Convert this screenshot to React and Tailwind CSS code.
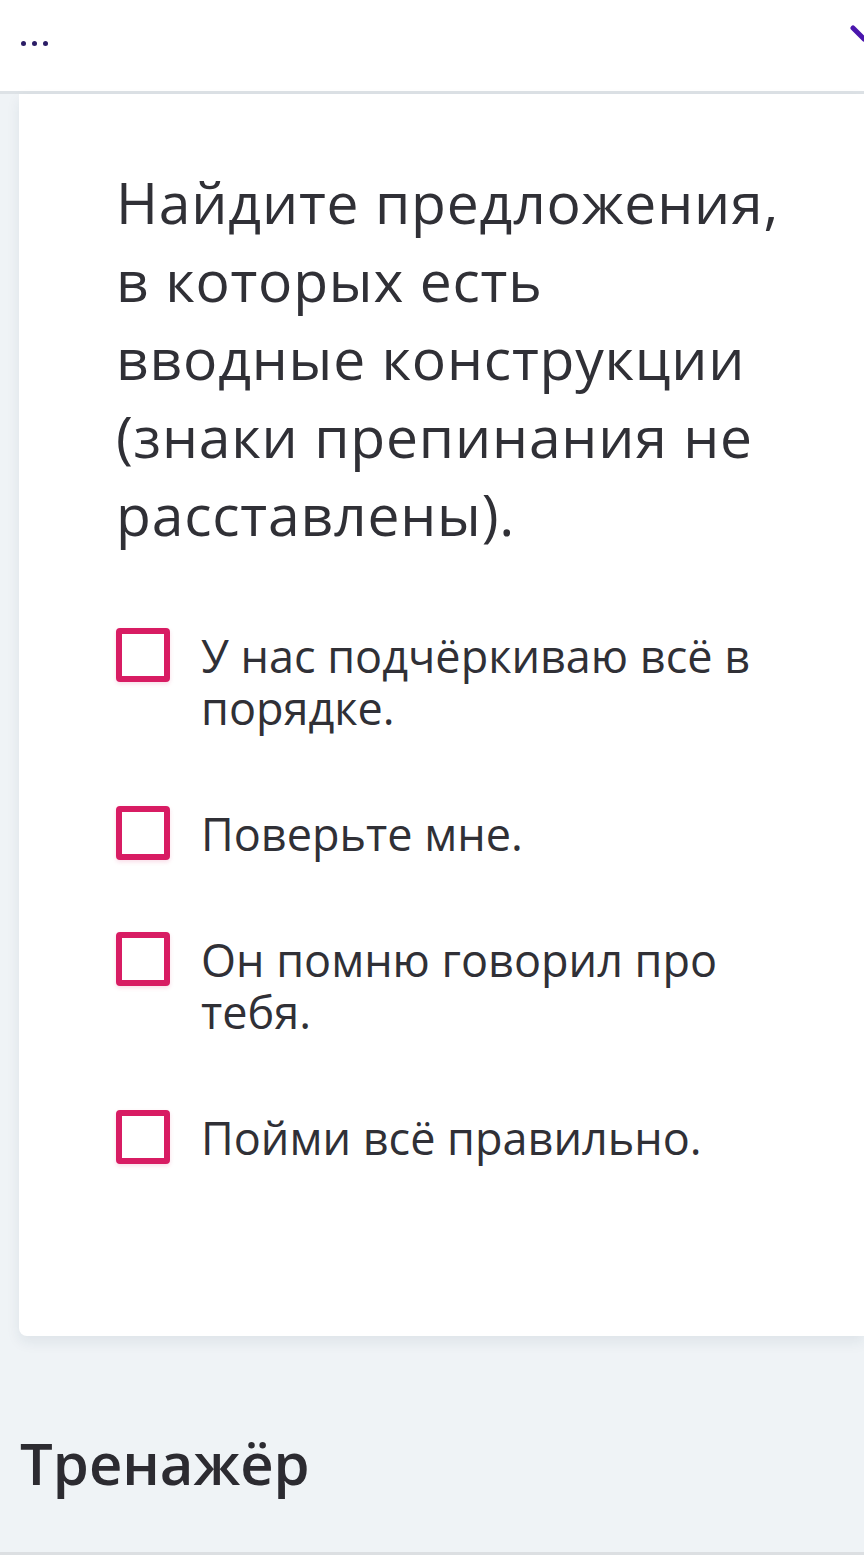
import React from 'react';

const options = [
  'У нас подчёркиваю всё в порядке.',
  'Поверьте мне.',
  'Он помню говорил про тебя.',
  'Пойми всё правильно.',
];

function Checkbox() {
  return (
    <span className="mt-[-2px] h-[54px] w-[54px] shrink-0 rounded-[4px] border-[6px] border-[#d81c63] bg-white shadow-[0_2px_4px_rgba(216,28,99,0.15)]"></span>
  );
}

export default function App() {
  return (
    <div className="flex min-h-[1555px] w-[864px] flex-col overflow-hidden bg-[#eff3f6] font-['Open_Sans',sans-serif] text-[#303036]">
      {/* Top bar */}
      <header className="flex h-[94px] shrink-0 items-start justify-between border-b-[3px] border-[#dde2e6] bg-white">
        <div className="mt-[41px] ml-[21px] flex gap-[6px]">
          <span className="h-[5px] w-[5px] rounded-full bg-[#2b1d66]"></span>
          <span className="h-[5px] w-[5px] rounded-full bg-[#2b1d66]"></span>
          <span className="h-[5px] w-[5px] rounded-full bg-[#2b1d66]"></span>
        </div>
        <svg width="14" height="40" viewBox="0 0 14 40" className="mt-[20px]">
          <path d="M3 8 L14 19" stroke="#4a16ad" strokeWidth="5" strokeLinecap="round" fill="none" />
        </svg>
      </header>

      {/* Task card */}
      <section className="ml-[19px] rounded-bl-[8px] bg-white pt-[69px] pr-[70px] pb-[172px] pl-[97px] shadow-[0_6px_14px_rgba(30,50,80,0.08)]">
        <h2 className="text-[57px] leading-[78px] tracking-[0.8px]">
          Найдите предложения, в которых есть вводные конструкции (знаки препинания не расставлены).
        </h2>
        <ul className="mt-[77px] flex flex-col gap-[74px]">
          {options.map((o) => (
            <li key={o} className="flex items-start gap-[31px]">
              <Checkbox />
              <span className="text-[45px] leading-[52px]">{o}</span>
            </li>
          ))}
        </ul>
      </section>

      <h3 className="mt-[87px] ml-[20px] text-[58px] leading-[80px] font-semibold text-[#2c2b31]">Тренажёр</h3>
      <div className="mt-auto h-[3px] bg-[#dcdfe2]"></div>
    </div>
  );
}
